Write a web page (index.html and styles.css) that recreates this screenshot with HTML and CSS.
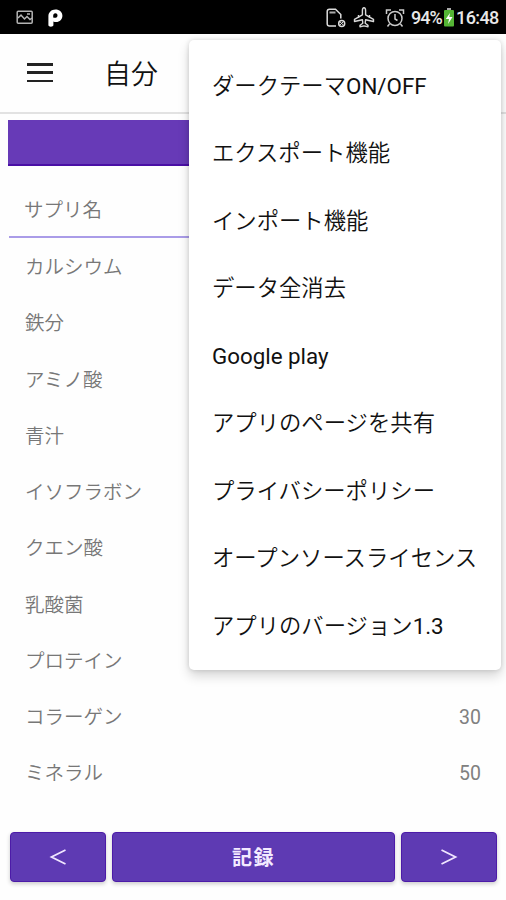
FILE: index.html
```html
<!DOCTYPE html>
<html lang="ja">
<head>
<meta charset="utf-8">
<title>自分</title>
<link rel="stylesheet" href="styles.css">
</head>
<body>
<div class="screen">
  <header class="status">
    <svg class="ic-image" width="18" height="15" viewBox="0 0 18 15" fill="none" stroke="#b4b4b4" stroke-width="1.5"><rect x="1.2" y="1.2" width="15" height="12" rx="1"/><path d="M2 8l3-3 3.500 4 2.500-2.500L14 9.500l2-1.500M11 4h3"/></svg>
    <svg class="ic-p" width="16" height="18" viewBox="0 0 16 18"><path fill="#fff" fill-rule="evenodd" d="M.4 16.300V7.200C.4 3.200 3.400.4 7.400.4c4.100 0 7 2.700 7 6.300 0 3.700-2.700 6.300-6.300 6.300-1 0-1.900-.2-2.700-.6v3.900c0 1.900-5 1.900-5 0zM7.300 4.300C6 4.300 5.200 5.300 5.200 6.800v1.800c2.700.7 4.300-.3 4.300-2.200 0-1.300-.9-2.100-2.200-2.100z"/></svg>
    <span class="spacer"></span>
    <svg class="ic-sim" width="20" height="20" viewBox="0 0 20 20" fill="none" stroke="#ddd" stroke-width="1.5"><path d="M10 18H3.500Q1.200 18 1.200 15.700V3.500Q1.200 1.300 3.500 1.300H9.500L14.800 6.500V10.500"/><path d="M3.500 4.500h6" stroke-width="2" stroke="#aaa"/><circle cx="15.700" cy="15.400" r="3"/><path d="M13.500 13.400l4.200 4M17.700 13.400l-4.200 4" stroke-width="1"/></svg>
    <svg class="ic-plane" width="22" height="21" viewBox="0 0 22 21" fill="none" stroke="#d8d8d8" stroke-width="1.400" stroke-linejoin="round"><path d="M11 .8c-1.200 0-1.600 1.500-1.600 3v4L1.500 12.300v2.200l7.900-1.800.4 3.500-2.800 2v1.500l4-.8 4 .8v-1.500l-2.800-2 .4-3.500 7.900 1.800v-2.200l-7.900-4.500v-4c0-1.500-.4-3-1.600-3z"/><path d="M5.500 8v3M16.500 8v3"/></svg>
    <svg class="ic-alarm" width="20" height="20" viewBox="0 0 20 20" fill="none" stroke="#ccc" stroke-width="1.500"><circle cx="10" cy="10.500" r="7"/><path d="M10 6v5l2.500 1.500M1.500 6V2H6M18.500 6V2H14M4.500 16l-2 2.500M15.500 16l2 2.500"/></svg>
    <span class="pct">94%</span>
    <svg class="ic-bat" width="10" height="19" viewBox="0 0 10 19"><path fill="#aaa" d="M3 0h4v3H3z"/><rect y="2" width="10" height="16.500" rx="1" fill="#55b535"/><path fill="#fff" d="M6 5L1.800 11H5l-1 5 4.500-7H5.300z"/></svg>
    <span class="clock">16:48</span>
  </header>
  <div class="appbar">
    <div class="burger"><i></i><i></i><i></i></div>
    <h1>自分</h1>
  </div>
  <main class="content">
    <div class="banner"></div>
    <div class="head">サプリ名</div>
    <ul class="list">
      <li><span>カルシウム</span></li>
      <li><span>鉄分</span></li>
      <li><span>アミノ酸</span></li>
      <li><span>青汁</span></li>
      <li><span>イソフラボン</span></li>
      <li><span>クエン酸</span></li>
      <li><span>乳酸菌</span></li>
      <li><span>プロテイン</span></li>
      <li><span>コラーゲン</span><span class="num">30</span></li>
      <li><span>ミネラル</span><span class="num">50</span></li>
    </ul>
  </main>
  <footer class="actions">
    <button><svg width="18" height="18" viewBox="0 0 18 18"><path d="M16.500 2L2.500 9l14 7"/></svg></button>
    <button class="save">記録</button>
    <button><svg width="18" height="18" viewBox="0 0 18 18"><path d="M1.500 2l14 7-14 7"/></svg></button>
  </footer>
  <nav class="menu">
    <a>ダークテーマ<span>ON/OFF</span></a>
    <a>エクスポート機能</a>
    <a>インポート機能</a>
    <a>データ全消去</a>
    <a class="latin"><span>Google play</span></a>
    <a>アプリのページを共有</a>
    <a>プライバシーポリシー</a>
    <a>オープンソースライセンス</a>
    <a>アプリのバージョン<span>1.3</span></a>
  </nav>
</div>
</body>
</html>
```
FILE: styles.css
```css
* { box-sizing: border-box; }
body { margin: 0; font-family: Roboto, "Noto Sans CJK JP", sans-serif; background: #fefefe; }
.screen { position: relative; width: 506px; height: 900px; overflow: hidden; display: flex; flex-direction: column; }
.status { height: 34px; background: #000; color: #e8e8e8; display: flex; align-items: center; padding: 1px 8px 0 16px; font-size: 18px; flex: none; }
.spacer { flex: 1; }
.ic-p { margin-left: 14px; }
.ic-plane { margin-left: 7px; }
.ic-alarm { margin-left: 10px; }
.pct { margin-left: 6px; width: 33px; letter-spacing: -1px; font-weight: 500; }
.clock { margin-left: 2px; width: 42px; letter-spacing: -0.6px; font-weight: 500; white-space: nowrap; }
.appbar { height: 80px; border-bottom: 2px solid #e2e2e2; display: flex; align-items: center; padding-left: 27px; flex: none; }
.burger { width: 26px; height: 19px; display: flex; flex-direction: column; justify-content: space-between; margin-top: -1px; }
.burger i { height: 2.500px; background: #222; }
h1 { margin: -1px 0 0 51px; font-size: 27px; font-weight: 350; color: #111; }
.content { padding: 6px 8px 0; }
.banner { height: 46px; background: #673ab7; border-bottom: 2px solid #4a0fa5; }
.head { height: 72px; padding: 15px 0 0 15px; margin-left: 1px; border-bottom: 2px solid #aa9ce8; display: flex; align-items: center; font-size: 19.500px; color: #777; font-weight: 350; }
.list { list-style: none; margin: 0; padding: 0 17px; }
.list li { height: 56.250px; padding-bottom: 1px; display: flex; align-items: center; justify-content: space-between; font-size: 19.500px; font-weight: 350; color: #777; }
.num { padding-top: 3px; color: #808080; font-weight: 400; }
.actions { position: relative; display: flex; gap: 6px; padding: 0 9px 0 10px; margin-top: 31px; }
.actions button { width: 96px; height: 50px; border: 1px solid #4c1ba8; border-radius: 4px; background: #5e3ab3; color: #f3eaff; display: flex; align-items: center; justify-content: center; padding: 0; box-shadow: 0 2px 4px rgba(0,0,0,.2); }
.actions .save { flex: 1; font: 700 20px "Noto Sans CJK JP", sans-serif; letter-spacing: 1.500px; }
.actions path { fill: none; stroke: #f0e6ff; stroke-width: 1.800; }
.menu { position: absolute; left: 189px; top: 40px; width: 312px; height: 630px; padding: 13px 23px 0; background: #fff; border-radius: 5px; box-shadow: 0 6px 12px rgba(0,0,0,.16), 0 0 5px rgba(0,0,0,.14); }
.menu a { display: flex; align-items: baseline; height: 67.450px; line-height: 67.450px; font-size: 22.350px; font-weight: 350; color: #111; white-space: nowrap; }
.menu span { font-weight: 400; }
.menu .latin { padding-top: 0; }
```
